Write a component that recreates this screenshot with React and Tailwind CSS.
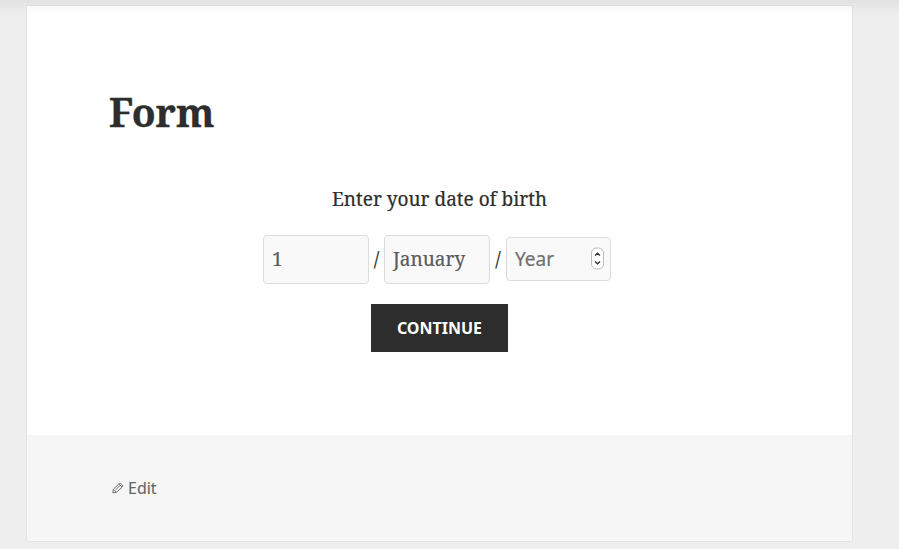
const serif = "font-['Noto_Serif','DejaVu_Serif',serif]";

function Field({ children, className = "" }) {
  return (
    <div className={`flex items-center rounded-[4px] border border-[#dcdcdc] bg-[#f9f9f9] pl-2 ${className}`}>
      {children}
    </div>
  );
}

function Stepper() {
  return (
    <svg width="13" height="23" viewBox="0 0 13 23" className="mr-[6px] shrink-0">
      <rect x=".5" y="1" width="12" height="21" rx="5" fill="#fff" stroke="#bcbcbc" />
      <path d="M4 8.5 6.5 6.3 9 8.5M4 14.5 6.5 16.7 9 14.5" fill="none" stroke="#333" strokeWidth="1.5" />
    </svg>
  );
}

function Pencil() {
  return (
    <svg width="12" height="12" viewBox="0 0 12 12" fill="none" stroke="#707070" strokeWidth="1">
      <path d="M.8 10.8 1.4 7.2 7.2 1.5Q8 .9 8.8 1.5L10.5 3.2Q11.1 4 10.5 4.8L4.5 10.3Z" />
      <path d="M1.5 7.5 4.2 10.2M3.5 8 8.5 3M7 2 10 5" strokeWidth=".9" />
    </svg>
  );
}

export default function App() {
  return (
    <div className="relative h-[549px] w-[899px] overflow-hidden bg-[#eeeeee] pl-[27px] pt-[6px]">
      <article className="flex h-[535px] w-[825px] flex-col bg-white shadow-[0_0_1px_rgba(0,0,0,0.25)]">
        <div className="h-[429px] pt-[78px]">
          <h1 className={`ml-[82px] h-[56px] w-fit text-[39px] font-bold leading-[56px] text-[#2d2d2d] [-webkit-text-stroke:0.3px] ${serif}`}>Form</h1>
          <form className="mt-[43px] flex flex-col items-center">
            <label className={`h-[32px] whitespace-nowrap text-[19px] leading-[32px] text-[#2d2d2d] [-webkit-text-stroke:0.2px] ${serif}`}>Enter your date of birth</label>
            <div className={`mt-[20px] -ml-[5px] flex items-center text-[19px] text-[#2d2d2d] [-webkit-text-stroke:0.2px] ${serif}`}>
              <Field className="h-[49px] w-[106px] text-[#5b5b5b]"><span>1</span></Field>
              <span className="w-[15px] text-center">/</span>
              <Field className="h-[49px] w-[106px] text-[#5b5b5b]"><span>January</span></Field>
              <span className="w-[16px] text-center">/</span>
              <Field className="mb-[2px] h-[44px] w-[105px] justify-between font-['Noto_Sans',sans-serif] text-[#707070]"><span className="pt-[2px]">Year</span><Stepper /></Field>
            </div>
            <button type="button" className="mt-[20px] h-[48px] w-[137px] bg-[#2d2d2d] font-['Noto_Sans',sans-serif] text-[16px] font-bold text-white">CONTINUE</button>
          </form>
        </div>
        <footer className="flex grow items-center gap-[4px] bg-[#f6f6f6] pl-[85px] font-['Noto_Sans',sans-serif] text-[16px] text-[#656565] [-webkit-text-stroke:0.1px]">
          <Pencil />
          <span>Edit</span>
        </footer>
      </article>
      <div className="absolute inset-x-0 top-0 h-[15px] bg-gradient-to-b from-black/5 to-transparent" />
    </div>
  );
}
